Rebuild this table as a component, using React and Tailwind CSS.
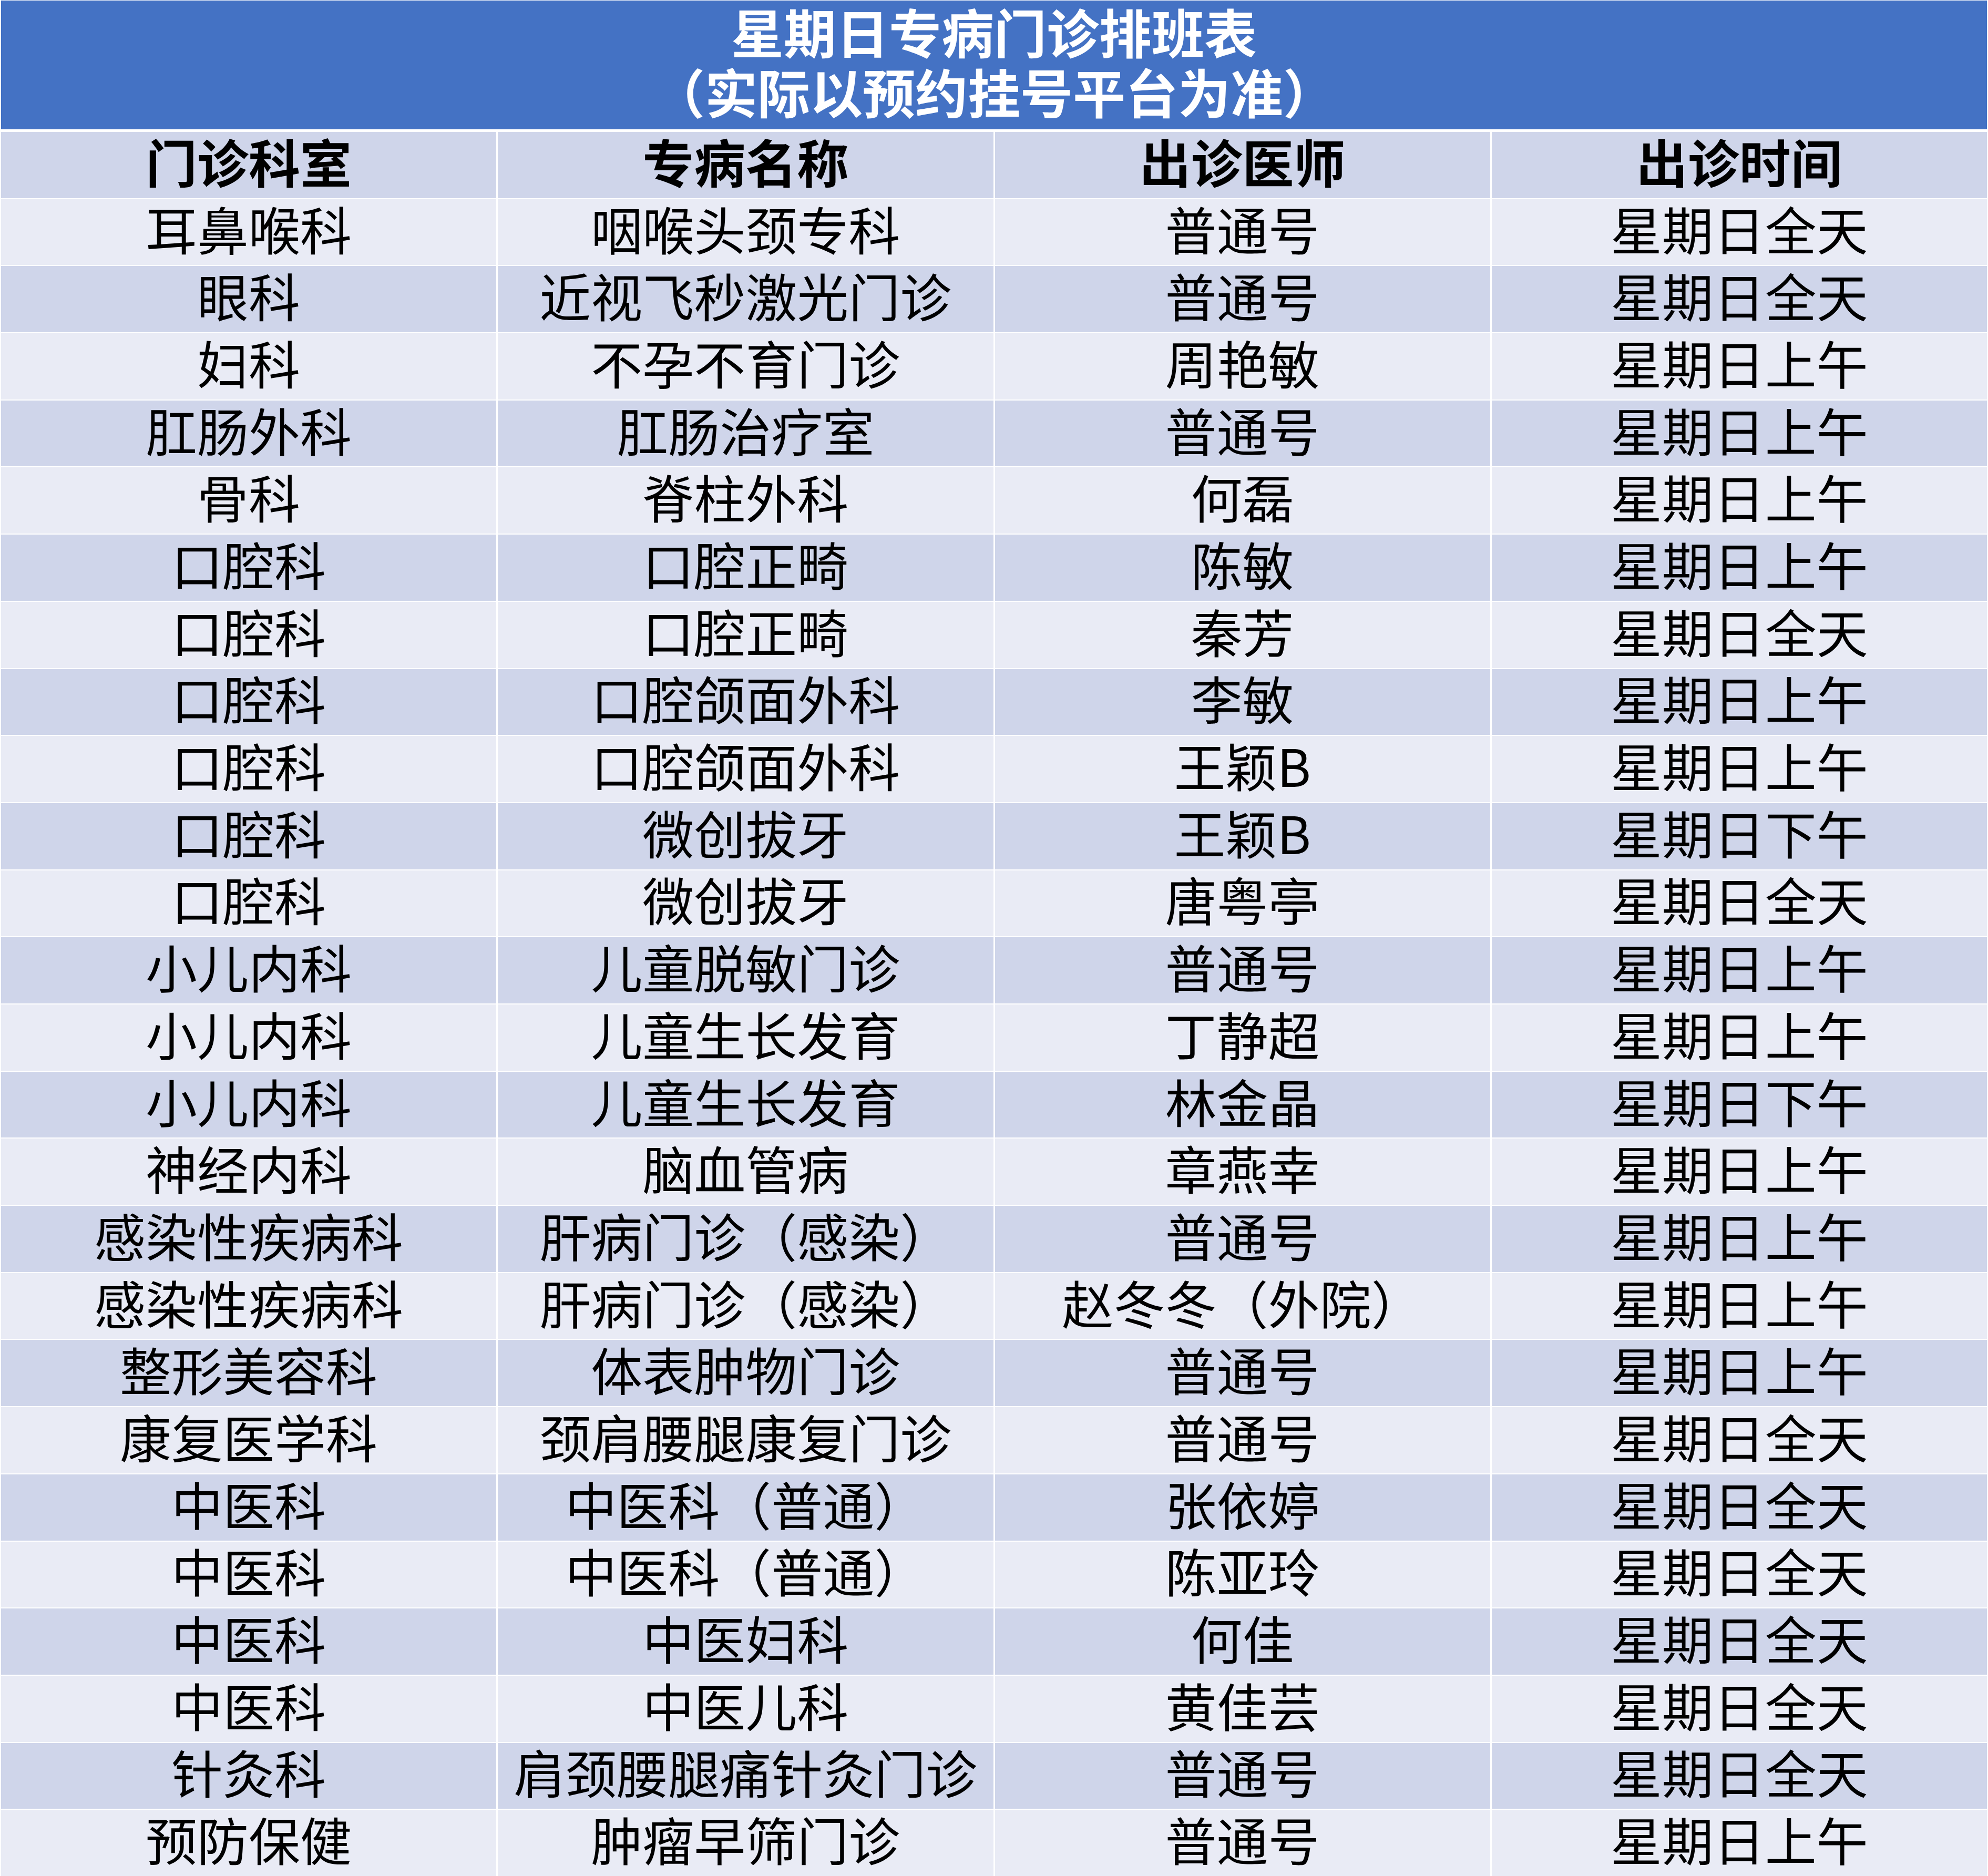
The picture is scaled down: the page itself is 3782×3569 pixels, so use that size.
import React from 'react';

const headers = ['门诊科室', '专病名称', '出诊医师', '出诊时间'];

const rows = [
  ['耳鼻喉科', '咽喉头颈专科', '普通号', '星期日全天'],
  ['眼科', '近视飞秒激光门诊', '普通号', '星期日全天'],
  ['妇科', '不孕不育门诊', '周艳敏', '星期日上午'],
  ['肛肠外科', '肛肠治疗室', '普通号', '星期日上午'],
  ['骨科', '脊柱外科', '何磊', '星期日上午'],
  ['口腔科', '口腔正畸', '陈敏', '星期日上午'],
  ['口腔科', '口腔正畸', '秦芳', '星期日全天'],
  ['口腔科', '口腔颌面外科', '李敏', '星期日上午'],
  ['口腔科', '口腔颌面外科', '王颖B', '星期日上午'],
  ['口腔科', '微创拔牙', '王颖B', '星期日下午'],
  ['口腔科', '微创拔牙', '唐粤亭', '星期日全天'],
  ['小儿内科', '儿童脱敏门诊', '普通号', '星期日上午'],
  ['小儿内科', '儿童生长发育', '丁静超', '星期日上午'],
  ['小儿内科', '儿童生长发育', '林金晶', '星期日下午'],
  ['神经内科', '脑血管病', '章燕幸', '星期日上午'],
  ['感染性疾病科', '肝病门诊（感染）', '普通号', '星期日上午'],
  ['感染性疾病科', '肝病门诊（感染）', '赵冬冬（外院）', '星期日上午'],
  ['整形美容科', '体表肿物门诊', '普通号', '星期日上午'],
  ['康复医学科', '颈肩腰腿康复门诊', '普通号', '星期日全天'],
  ['中医科', '中医科（普通）', '张依婷', '星期日全天'],
  ['中医科', '中医科（普通）', '陈亚玲', '星期日全天'],
  ['中医科', '中医妇科', '何佳', '星期日全天'],
  ['中医科', '中医儿科', '黄佳芸', '星期日全天'],
  ['针灸科', '肩颈腰腿痛针灸门诊', '普通号', '星期日全天'],
  ['预防保健', '肿瘤早筛门诊', '普通号', '星期日上午'],
];

const font = { fontFamily: '"Noto Sans CJK SC", "Noto Sans", sans-serif' };

const App = () => {
  return (
    <div
      className="w-[3782px] h-[3569px] bg-white flex flex-col px-[2px] pt-[1px]"
      style={font}
    >
      {/* title band */}
      <div className="h-[245px] bg-[#4472C4] flex flex-col items-center justify-center pb-[16px] text-white font-bold text-[100px] leading-[114px]">
        <div>星期日专病门诊排班表</div>
        <div>（实际以预约挂号平台为准）</div>
      </div>

      <div className="mt-[5px] flex-1 grid grid-cols-4 grid-rows-[repeat(26,minmax(0,1fr))] gap-x-[3px] gap-y-[2px]">
        {headers.map((h) => (
          <div
            key={h}
            className="bg-[#CFD5EA] flex items-center justify-center pb-[18px] text-[98px] leading-none font-bold text-black whitespace-nowrap"
          >
            {h}
          </div>
        ))}
        {rows.map((row, i) =>
          row.map((cell, j) => (
            <div
              key={`${i}-${j}`}
              className={`${i % 2 === 0 ? 'bg-[#E9EBF5]' : 'bg-[#CFD5EA]'} flex items-center justify-center pb-[18px] text-[98px] leading-none text-black whitespace-nowrap`}
            >
              {cell}
            </div>
          ))
        )}
      </div>
    </div>
  );
};

export default App;
